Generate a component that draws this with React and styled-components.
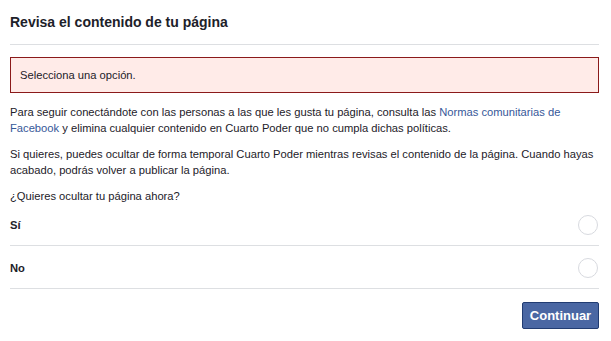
import React from "react";
import styled, { createGlobalStyle } from "styled-components";

const Global = createGlobalStyle`
  html, body { margin: 0; padding: 0; background: #ffffff; }
  body { font-family: "Liberation Sans", Arial, Helvetica, sans-serif; color: #1d2129; }
  * { box-sizing: border-box; }
`;

const Dialog = styled.div`
  width: 611px;
  height: 341px;
  padding: 0 12px 0 10px;
  display: flex;
  flex-direction: column;
`;

const Header = styled.div`
  height: 45px;
  display: flex;
  align-items: center;
  border-bottom: 1px solid #dddfe2;
  padding-bottom: 1px;
`;

const Title = styled.h2`
  margin: 0;
  font-size: 14px;
  font-weight: bold;
  color: #1d2129;
`;

const ErrorBox = styled.div`
  margin-top: 12px;
  height: 36px;
  border: 1px solid #8b1a1a;
  background: #ffebe8;
  display: flex;
  align-items: center;
  padding: 0 9px;
  font-size: 11.2px;
  color: #1d2129;
`;

const Body = styled.div`
  margin-top: 11px;
  font-size: 11.2px;
  line-height: 16px;
`;

const Para = styled.p`
  margin: 0 0 10px 0;
`;

const Link = styled.a`
  color: #365899;
  text-decoration: none;
`;

const Question = styled.p`
  margin: 0;
`;

const Options = styled.div`
  display: flex;
  flex-direction: column;
`;

const OptionRow = styled.label`
  height: ${(p) => p.$h}px;
  display: flex;
  align-items: center;
  justify-content: space-between;
  border-bottom: 1px solid #dddfe2;
  font-size: 11.2px;
  font-weight: bold;
  color: #1d2129;
  padding-top: 1px;
`;

const Radio = styled.span`
  width: 20px;
  height: 20px;
  border-radius: 50%;
  border: 1px solid #d8dadf;
  background: #fff;
  margin-right: 1px;
`;

const Footer = styled.div`
  display: flex;
  justify-content: flex-end;
  margin-top: 13px;
`;

const Button = styled.button`
  width: 77px;
  height: 27px;
  background: #4a67a3;
  border: 1px solid #213c72;
  border-radius: 2px;
  color: #fff;
  font-family: "Liberation Sans", Arial, Helvetica, sans-serif;
  font-size: 13px;
  font-weight: bold;
  padding: 0;
  cursor: pointer;
`;

export default function App() {
  return (
    <>
      <Global />
      <Dialog>
        <Header>
          <Title>Revisa el contenido de tu página</Title>
        </Header>
        <ErrorBox>Selecciona una opción.</ErrorBox>
        <Body>
          <Para>
            Para seguir conectándote con las personas a las que les gusta tu página, consulta las{" "}
            <Link href="#">Normas comunitarias de Facebook</Link> y elimina cualquier contenido en Cuarto Poder que no cumpla dichas políticas.
          </Para>
          <Para>
            Si quieres, puedes ocultar de forma temporal Cuarto Poder mientras revisas el contenido de la página. Cuando hayas acabado, podrás volver a publicar la página.
          </Para>
          <Question>¿Quieres ocultar tu página ahora?</Question>
        </Body>
        <Options>
          <OptionRow $h={42}>
            Sí
            <Radio />
          </OptionRow>
          <OptionRow $h={43}>
            No
            <Radio />
          </OptionRow>
        </Options>
        <Footer>
          <Button>Continuar</Button>
        </Footer>
      </Dialog>
    </>
  );
}
